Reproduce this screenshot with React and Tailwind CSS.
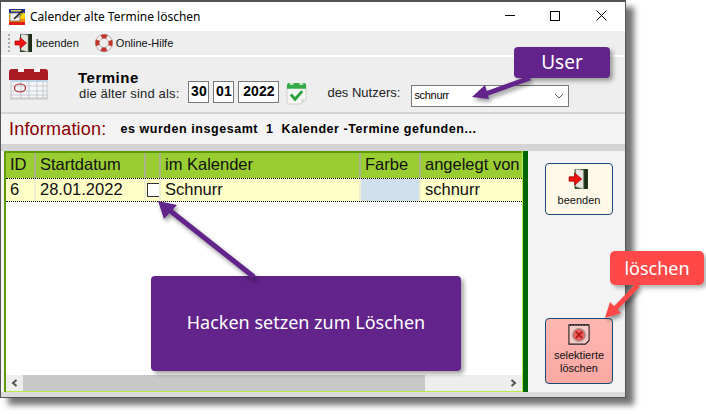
const SANS = 'font-["Liberation_Sans",Arial,sans-serif]';

function AppIcon() {
  return (
    <svg width="16" height="16" viewBox="0 0 16 16">
      <rect x="0" y="0" width="16" height="4" fill="#1c2f9c" />
      <rect x="2" y="1" width="12" height="1.5" fill="#e8d24a" />
      <rect x="0" y="4" width="16" height="12" fill="#ffd800" />
      <rect x="0" y="10" width="16" height="3" fill="#f08a00" />
      <rect x="0" y="13" width="16" height="3" fill="#e02010" />
      <rect x="1" y="4" width="10" height="8" fill="#f2f0f6" stroke="#555" strokeWidth="0.6" />
      <path d="M5 10 L14 1" stroke="#222" strokeWidth="1.6" />
      <path d="M8 9 L15 3" stroke="#6a6a6a" strokeWidth="0.8" />
    </svg>
  );
}

function DoorIcon({ size = 20 }) {
  return (
    <svg width={size} height={size} viewBox="0 0 20 20">
      <rect x="6" y="1" width="12" height="18" fill="#2e4a24" />
      <rect x="15" y="1" width="3" height="18" fill="#1c2c18" />
      <path d="M7 1 L14 2 L14 19 L7 17 Z" fill="#e6e6e0" stroke="#8a8a80" strokeWidth="0.5" />
      <path d="M1 8 H6 V4.5 L12.5 10 L6 15.5 V12 H1 Z" fill="#ee1111" stroke="#a80000" strokeWidth="0.7" />
    </svg>
  );
}

function HelpIcon() {
  return (
    <svg width="18" height="18" viewBox="0 0 18 18">
      <circle cx="9" cy="9" r="6.7" fill="none" stroke="#f1eeee" strokeWidth="4" />
      <circle cx="9" cy="9" r="6.7" fill="none" stroke="#c8342c" strokeWidth="4" strokeDasharray="5.5 5" strokeDashoffset="2.7" />
      <circle cx="9" cy="9" r="8.6" fill="none" stroke="#8c6b6b" strokeWidth="0.5" />
      <circle cx="9" cy="9" r="4.7" fill="none" stroke="#8c6b6b" strokeWidth="0.5" />
    </svg>
  );
}

function CalendarIcon() {
  return (
    <svg width="42" height="34" viewBox="0 0 42 34">
      <rect x="2" y="28" width="38" height="5" fill="#cfcfcf" opacity="0.7" />
      <rect x="3" y="8" width="36" height="23" fill="#f4f5f7" stroke="#b5b5b5" strokeWidth="0.7" />
      <rect x="3" y="13" width="36" height="2" fill="#bcd4e8" />
      <path d="M3 19H39M3 24H39M3 28H39M13 14V31M21 14V31M29 14V31M35 14V31" stroke="#b4bcc6" strokeWidth="0.7" />
      <path d="M1 13 V5 Q1 2 4 2 H10 V5 H16 V2 H26 V5 H32 V2 H37 Q40 2 40 5 V13 Z" fill="#aa1a22" />
      <rect x="10" y="1" width="5" height="4" fill="#f2f2f2" />
      <rect x="27" y="1" width="5" height="4" fill="#f2f2f2" />
      <ellipse cx="12" cy="21" rx="5.5" ry="4" fill="none" stroke="#b5232a" strokeWidth="1.2" />
    </svg>
  );
}

function CheckCalendarIcon() {
  return (
    <svg width="21" height="23" viewBox="0 0 22 24">
      <path d="M1 5 H21 V18 L16 23 H1 Z" fill="#f5f6f4" stroke="#c6c8c4" strokeWidth="0.8" />
      <path d="M16 23 V18 H21 Z" fill="#d8d8d8" />
      <path d="M1 7 V3 Q1 1 3 1 H19 Q21 1 21 3 V7 Z" fill="#35a848" />
      <rect x="4" y="1" width="4" height="2" fill="#bfe8c4" />
      <rect x="14" y="1" width="4" height="2" fill="#bfe8c4" />
      <path d="M5 13 L9.5 18 L17 9.5" fill="none" stroke="#2ea23e" strokeWidth="3" />
    </svg>
  );
}

function DeleteIcon() {
  return (
    <svg width="22" height="22" viewBox="0 0 24 24">
      <path d="M1 2 H23 V19 L19 23 H1 Z" fill="#f6c9c4" stroke="#222" strokeWidth="1.2" />
      <path d="M2 2 H22" stroke="#222" strokeWidth="2" strokeDasharray="1.5 1.5" />
      <circle cx="12" cy="13" r="7" fill="#e8605c" stroke="#9a9a9a" strokeWidth="1.2" />
      <path d="M8.5 9.5 L15.5 16.5 M15.5 9.5 L8.5 16.5" stroke="#b01414" strokeWidth="1.8" />
    </svg>
  );
}

function Field({ value, width }) {
  return (
    <div className={`flex h-[22px] items-center justify-center border border-[#777] bg-white text-[14px] font-bold text-black ${width}`}>
      {value}
    </div>
  );
}

function HeaderCell({ children }) {
  return <div className="truncate border-r-2 border-[#a9b48e] pl-[4px] leading-[22px]">{children}</div>;
}

function RowCell({ children, className = '' }) {
  return <div className={`truncate border-r-2 border-[#eeeed0] pl-[4px] leading-[20px] ${className}`}>{children}</div>;
}

function SideButton({ className, children, label }) {
  return (
    <div className={`flex w-[68px] flex-col items-center rounded-[4px] border border-[#1c4a78] text-center text-[11px] leading-[13px] text-[#111] ${className}`}>
      {children}
      <span>{label}</span>
    </div>
  );
}

function Arrow({ className, width, height, x1, y1, x2, y2, head, color }) {
  return (
    <svg className={`absolute drop-shadow-[2px_3px_2px_rgba(0,0,0,0.4)] ${className}`} width={width} height={height}>
      <line x1={x1} y1={y1} x2={x2} y2={y2} stroke={color} strokeWidth="5" />
      <polygon points={head} fill={color} />
    </svg>
  );
}

export default function App() {
  return (
    <div className={`relative h-[414px] w-[706px] overflow-hidden bg-white ${SANS}`}>
      <div className="flex h-[398px] w-[626px] flex-col border border-t-2 border-[#555] bg-[#f3f3f3] shadow-[8px_7px_6px_rgba(0,0,0,0.55)]">
        {/* title bar */}
        <div className="flex h-[29px] shrink-0 items-center bg-white pl-[8px]">
          <AppIcon />
          <span className="ml-[5px] font-['Noto_Sans',sans-serif] text-[12px] text-black">Calender alte Termine löschen</span>
          <div className="ml-auto flex items-center pb-[2px] text-black">
            <div className="mr-[35px] h-[1px] w-[10px] bg-black" />
            <div className="mr-[36px] h-[10px] w-[10px] border border-black" />
            <svg className="mr-[18px]" width="11" height="11" viewBox="0 0 11 11">
              <path d="M0.5 0.5 L10.5 10.5 M10.5 0.5 L0.5 10.5" stroke="#000" strokeWidth="1" />
            </svg>
          </div>
        </div>

        {/* toolbar */}
        <div className="flex h-[24px] shrink-0 items-center bg-[#eeeeee] pl-[7px] text-[11px] text-[#111]">
          <div className="mr-[4px] h-[18px] w-[2px] border-l-2 border-dotted border-[#aaa]" />
          <DoorIcon />
          <span className="ml-[2px]">beenden</span>
          <div className="ml-[16px]"><HelpIcon /></div>
          <span className="ml-[3px]">Online-Hilfe</span>
        </div>
        <div className="h-[2px] shrink-0 bg-white" />

        {/* filter row */}
        <div className="flex h-[55px] shrink-0 items-center bg-[#eeeeee] pl-[7px]">
          <div className="mb-[2px]"><CalendarIcon /></div>
          <div className="ml-[28px] flex flex-col pt-[1px]">
            <span className="text-[15px] leading-[17px] font-bold tracking-[0.5px] text-black">Termine</span>
            <span className="pl-[1px] text-[13px] leading-[16px] tracking-[0.15px] text-[#222]">die älter sind als:</span>
          </div>
          <div className="mt-[14px] ml-[9px] flex items-center gap-[4px]">
            <Field value="30" width="w-[21px]" />
            <Field value="01" width="w-[21px]" />
            <Field value="2022" width="w-[41px]" />
          </div>
          <div className="mt-[17px] ml-[7px]"><CheckCalendarIcon /></div>
          <span className="mt-[17px] ml-[20px] text-[13px] text-[#222]">des Nutzers:</span>
          <div className="mt-[22px] ml-[11px] flex h-[22px] w-[158px] items-center justify-between border border-[#777] bg-white pr-[4px] pl-[2px] text-[11px] tracking-[-0.3px] text-black">
            schnurr
            <svg width="10" height="6" viewBox="0 0 10 6">
              <path d="M1 1 L5 5 L9 1" fill="none" stroke="#555" strokeWidth="1" />
            </svg>
          </div>
        </div>
        <div className="h-[2px] shrink-0 bg-[#d4d4d4]" />

        {/* info row */}
        <div className="flex h-[30px] shrink-0 items-center pl-[8px]">
          <span className="text-[18px] font-medium tracking-[0.2px] text-[#8b0000]">Information:</span>
          <span className="ml-[14px] whitespace-pre text-[12.5px] font-bold tracking-[0.55px] text-black">es wurden insgesamt  1  Kalender -Termine gefunden...</span>
        </div>
        <div className="h-[7px] shrink-0 bg-[#d4d4d4]" />

        {/* main */}
        <div className="flex min-h-0 flex-1 flex-col">
          <div className="flex min-h-0 flex-1">
            <div className="ml-[3px] flex w-[518px] flex-col border-t-2 border-l-2 border-[#5f9a0a] bg-white text-[16.5px] text-[#111]">
              <div className="grid h-[25px] shrink-0 grid-cols-[30px_110px_15px_200px_60px_1fr] bg-[#9acd32]">
                <HeaderCell>ID</HeaderCell>
                <HeaderCell>Startdatum</HeaderCell>
                <HeaderCell />
                <HeaderCell>im Kalender</HeaderCell>
                <HeaderCell>Farbe</HeaderCell>
                <div className="overflow-hidden pl-[4px] leading-[22px] whitespace-nowrap">angelegt von</div>
              </div>
              <div className="grid h-[24px] shrink-0 grid-cols-[30px_110px_15px_200px_60px_1fr] border-y border-dotted border-black bg-[#ffffc8]">
                <RowCell>6</RowCell>
                <RowCell>28.01.2022</RowCell>
                <RowCell className="flex items-center !pl-[1px]">
                  <div className="h-[14px] w-[13px] shrink-0 border border-[#333] bg-white" />
                </RowCell>
                <RowCell>Schnurr</RowCell>
                <RowCell className="bg-[#cfe0ec]" />
                <div className="truncate pl-[4px] leading-[20px]">schnurr</div>
              </div>
              <div className="min-h-0 flex-1" />
              <div className="flex h-[16px] shrink-0 bg-[#eeeeee]">
                <div className="flex w-[17px] items-center justify-center">
                  <svg width="7" height="8" viewBox="0 0 7 8">
                    <path d="M5.5 1 L2 4 L5.5 7" fill="none" stroke="#555" strokeWidth="2" />
                  </svg>
                </div>
                <div className="w-[402px] bg-[#c8c8c8]" />
                <div className="ml-auto flex w-[17px] items-center justify-center">
                  <svg width="7" height="8" viewBox="0 0 7 8">
                    <path d="M1.5 1 L5 4 L1.5 7" fill="none" stroke="#555" strokeWidth="2" />
                  </svg>
                </div>
              </div>
              <div className="h-[1px] shrink-0 bg-[#b7ee48]" />
            </div>
            <div className="w-[1px] shrink-0 bg-[#b7ee48]" />
            <div className="w-[5px] shrink-0 bg-[#006400]" />

            {/* side buttons */}
            <div className="flex flex-1 flex-col items-start pt-[12px] pl-[17px]">
              <SideButton className="h-[52px] bg-[#fdf8e8] pt-[4px]" label="beenden">
                <div className="mb-[4px] h-[22px]"><DoorIcon size={22} /></div>
              </SideButton>
              <SideButton className="mt-auto mb-[8px] h-[66px] bg-gradient-to-b from-[#ffb8b4] to-[#f9a8a2] pt-[4px]" label={<>selektierte<br />löschen</>}>
                <div className="mb-[4px] h-[22px]"><DeleteIcon /></div>
              </SideButton>
            </div>
          </div>
          <div className="h-[5px] shrink-0 bg-[#dcdcdc]" />
        </div>
      </div>

      {/* annotations */}
      <div className="absolute top-[47px] left-[514px] flex h-[31px] w-[96px] items-center justify-center rounded-[4px] bg-[#62238a] font-['Noto_Sans',sans-serif] text-[19px] text-white shadow-[3px_3px_4px_rgba(0,0,0,0.35)]">
        User
      </div>
      <Arrow className="top-[70px] left-[468px]" width="80" height="34" x1="62" y1="8" x2="12" y2="26" head="4,27 17,15 21,29" color="#62238a" />

      <div className="absolute top-[276px] left-[151px] flex h-[95px] w-[310px] items-center justify-center rounded-[4px] bg-[#62238a] pb-[2px] font-['Noto_Sans',sans-serif] text-[18px] text-white shadow-[3px_3px_4px_rgba(0,0,0,0.35)]">
        Hacken setzen zum Löschen
      </div>
      <Arrow className="top-[195px] left-[150px]" width="110" height="85" x1="104" y1="82" x2="18" y2="14" head="8,6 27,10 14,24" color="#62238a" />

      <div className="absolute top-[251px] left-[610px] flex h-[34px] w-[94px] items-center justify-center rounded-[5px] bg-[#ff4848] font-['Noto_Sans',sans-serif] text-[18px] text-white shadow-[3px_3px_4px_rgba(0,0,0,0.3)]">
        löschen
      </div>
      <Arrow className="top-[280px] left-[600px]" width="44" height="44" x1="38" y1="5" x2="12" y2="32" head="5,38 10,22 21,33" color="#ff4848" />
    </div>
  );
}
